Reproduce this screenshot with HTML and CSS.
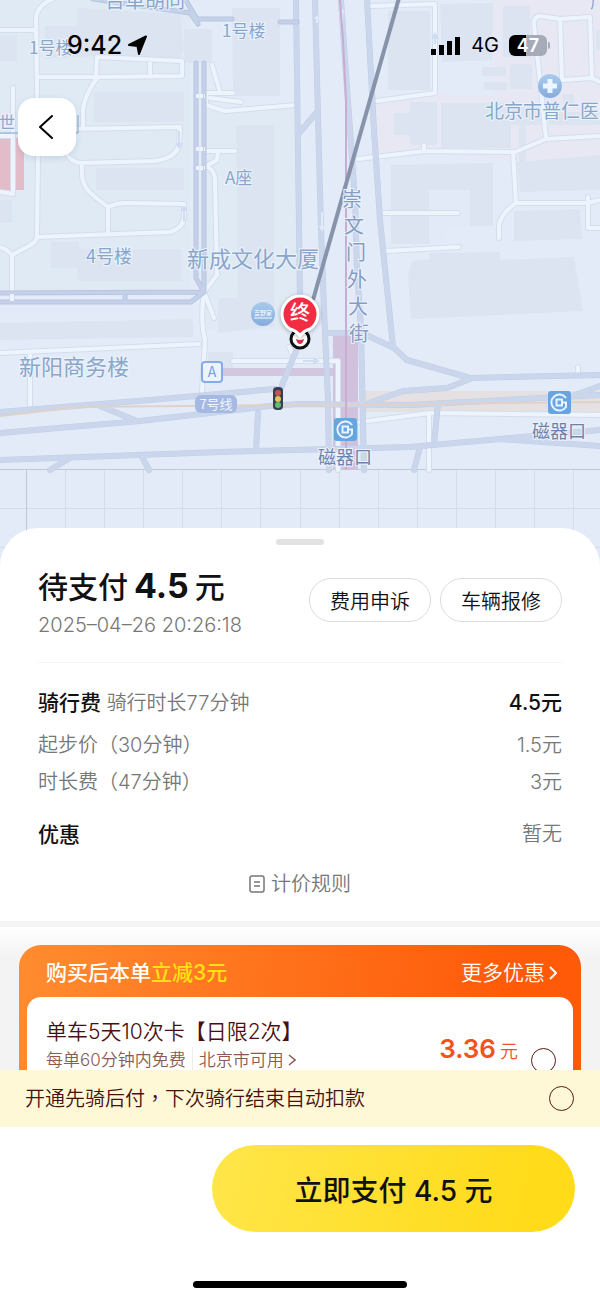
FILE: index.html
```html
<!DOCTYPE html>
<html lang="zh-CN">
<head>
    <meta charset="UTF-8">
    <meta name="viewport" content="width=device-width, initial-scale=1.0">
    <title>待支付</title>
    <link rel="stylesheet" href="styles.css">
</head>
<body>

    <main class="content">

        <section class="map">
            <svg class="map-canvas" viewBox="0 0 600 566" preserveAspectRatio="xMidYMin slice" role="img" aria-label="地图">
                <defs>
                    <path id="lanes" d="M55,-2 Q36,5 36,20 L38,156 L37,236 Q37,243 25,248 L12,255 V298 M0,30 H36 M38,77 H96 L97,57 L182,61 V76 L97,77 M150,60 V76 M97,78 Q83,98 83,112 V128 M72,129 L180,127 L179,145 Q176,158 155,161 L82,163 Q72,163 66,153 M82,163 V175 Q82,187 95,197 L108,207 V232 M108,207 Q118,203 125,203 L184,204 V215 Q184,228 170,232 L37,237 M13,88 V194 L0,192 M0,136 H13 M-2,247 Q5,247 12,255 M0,353 L199,344 M30,353 V405 M212,65 L220,92 M206,93 H233 M206,93 V105 L225,111 L297,105 M210,98 L241,102 M206,151 H235 M218,151 L217,160 L206,166 Q215,170 215,180 L217,275 L204,292 L214,318 M204,292 Q200,320 205,340 L202,392 M233,361 H338 V470 M371,6 L435,4 V93 L377,101 M358,159 L425,151 L515,152 L546,139 L600,136 M513,152 L516,203 Q502,212 499,225 V238 M516,203 H588 L600,200 M588,197 V228 H600 M546,138 L534,25 Q533,17 540,16 L560,19 L590,17 L592,78 L562,80 L560,19 M592,78 L600,82 M384,213 H458 M386,251 L459,247 M578,367 V375 M360,422 L430,413 L600,415 M429,415 V470 M424,151 V145 M289,347 L295,358"/>
                    <path id="streets" d="M296,0 L300,300 M315,0 L318,115 L321,230 L324,310 L328,400 L329,470 M300,132 L317,112 M341,0 L345,60 L350,130 L355,200 L357,270 L361,330 L364,470 M367,0 L374,130 L380,220 L393,347 L407,360 L470,378 L600,375 M328,333 H362 L394,348 M0,412 L150,400 L275,389 M0,433 L140,421 L270,406 L300,404 L410,405 L600,395 M0,460 L220,452 L410,447 L500,439 L600,430 M100,406 L137,421 M258,413 L256,450 M70,458 L50,470 M141,455 L149,470 M369,403 L403,391 L447,388 L470,379 M575,395 L600,386 M438,403 L434,445 M420,447 L414,470 M500,439 L600,446 M278,395 L298,346"/>
                    <path id="avenues" d="M93,-1 L190,13 L198,24 M185,-1 L197,19 H232 M280,22 H297 M196,63 V278 L204,292 M204,63 V292 M0,293 L204,292 L191,302 H0 M125,293 V302"/>
                    <g id="metro">
                        <rect width="23" height="23" rx="3" fill="#66a5e1"/>
                        <path d="M18,7 A8,8 0 1 0 18,16 V11.500 H14" fill="none" stroke="#eaf4ff" stroke-width="2"/>
                        <rect x="8.500" y="8.500" width="5.500" height="6" fill="none" stroke="#eaf4ff" stroke-width="2"/>
                    </g>
                    <linearGradient id="poi" x1="0" y1="0" x2="0" y2="1">
                        <stop offset="0" stop-color="#a9cbee"/>
                        <stop offset="1" stop-color="#86abdc"/>
                    </linearGradient>
                </defs>

                <rect width="600" height="566" fill="#e3ebf8"/>
                <path d="M0,0 H190 V290 H0 Z M206,110 L297,106 V330 H206 Z" fill="#dfeaf4"/>
                <path d="M493,0 H600 V160 L516,160 L425,152 L377,158 V103 L440,93 L493,96 Z" fill="#e8e8f5"/>

                <!-- grid below the last tile -->
                <path class="grid" d="M65,469 V566 M104,469 V566 M143,469 V566 M182,469 V566 M221,469 V566 M260,469 V566 M300,469 V566 M339,469 V566 M378,469 V566 M417,469 V566 M456,469 V566 M495,469 V566 M534,469 V566 M573,469 V566 M0,508 H600 M0,547 H600"/>
                <path class="grid grid-main" d="M0,469 H600 M26,469 V566"/>

                <!-- buildings -->
                <path class="building" d="M77,8 L180,14 L184,48 L180,60 L100,56 L45,58 V26 H77 Z M184,29 H212 V63 H184 Z M0,35 H17 V61 H0 Z M232,8 H280 V96 H233 Z M94,92 H184 V122 H94 Z M96,168 H184 V190 H96 Z M0,200 H12 V223 H0 Z M236,125 H274 V298 L275,326 L218,333 V298 H238 Z M51,242 H79 V249 H181 V281 H77 V268 H51 Z M0,323 L193,319 V337 L0,340 Z M208,352 H233 V368 H208 Z"/>
                <path class="building" d="M388,11 H430 V90 H388 Z M440,4 L493,3 L492,60 L442,62 Z M503,6 H530 V57 H503 Z M482,67 H506 V76 H482 Z M484,82 H507 V90 H484 Z M510,64 H532 V89 H510 Z M410,102 H437 V145 H410 V135 H394 V113 H410 Z M441,103 H545 V125 H526 V162 H519 V125 H511 V148 H441 Z M549,112 H600 V125 H549 Z M563,94 H574 V104 H563 Z M391,165 L493,163 V226 H446 V244 H391 Z M517,162 L600,155 V190 L520,192 Z M514,211 L580,209 L582,239 L514,241 Z M596,30 H600 V50 H596 Z M408,276 L412,261 L430,259 V253 L500,252 V260 L574,257 L583,311 L411,319 Z"/>
                <path d="M429,190 H470 V227 H446 V244 H429 Z" fill="#e1eaf6"/>
                <path d="M0,138 H24 V190 H0 Z" fill="#e3bcc9"/>

                <path d="M360,391 H600 V412 H360 Z" fill="#e5e1e2"/>
                <path d="M222,372 H333" stroke="#d3c7e0" stroke-width="8"/>
                <path d="M333,336 H358 V470 H333 Z" fill="#d0c1dd"/>

                <!-- roads, edge first and fill on top -->
                <use href="#lanes" class="lane-edge"/>
                <use href="#lanes" class="lane"/>
                <use href="#streets" class="street-edge"/>
                <use href="#streets" class="street"/>
                <use href="#avenues" class="avenue-edge"/>
                <use href="#avenues" class="avenue"/>
                <path d="M196,96 H205 M196,149 H205 M196,168 H205 M12,294 V302" stroke="#edf3fd" stroke-width="4" stroke-dasharray="3 1"/>
                <path d="M317,15 l-3,4 h2 v4 h2 v-4 h2 Z M342,8 l-3,5 h2 v10 h2 v-10 h2 Z M322,232 l-3,-6 h2 v-14 h2 v14 h2 Z" fill="#e1eafa"/>
                <path d="M435,32 l-4,7 h3 v5 h2 v-5 h3 Z M184,205 l-4,6 h3 v10 h2 v-10 h3 Z M179,149 l-4,-6 h3 v-12 h2 v12 h3 Z M320,361 l-7,-4 v3 h-10 v2 h10 v3 Z" fill="#cfdcf3"/>

                <path d="M0,416 L80,407 L275,405 L420,404 L600,402" fill="none" stroke="#e0d2c8" stroke-width="2"/>
                <path d="M340,0 L343,40 L346,100 V470" fill="none" stroke="#c8acd2" stroke-width="2"/>

                <!-- ride track -->
                <path d="M399,-2 L313,300" stroke="#8693aa" stroke-width="4"/>

                <g class="label">
                    <text x="29" y="54" font-size="17">1号楼</text>
                    <text x="222" y="37" font-size="17">1号楼</text>
                    <text x="105" y="8" font-size="20">台革胡同</text>
                    <text x="225" y="184" font-size="17">A座</text>
                    <text x="86" y="263" font-size="18">4号楼</text>
                    <text x="-1" y="128" font-size="16">世</text>
                    <text x="187" y="267" font-size="22">新成文化大厦</text>
                    <text x="19" y="375" font-size="22">新阳商务楼</text>
                    <text x="485" y="118" font-size="19">北京市普仁医院</text>
                    <text x="590" y="8" font-size="17">广</text>
                </g>
                <path d="M0,133 H78 V115" fill="none" stroke="#86a5c8" stroke-width="1"/>
                <g class="label label-street" font-size="20">
                    <text x="342" y="207">崇</text>
                    <text x="344" y="233">文</text>
                    <text x="346" y="260">门</text>
                    <text x="347" y="287">外</text>
                    <text x="348" y="314">大</text>
                    <text x="349" y="341">街</text>
                </g>
                <g class="label label-station" font-size="18">
                    <text x="318" y="464">磁器口</text>
                    <text x="532" y="438">磁器口</text>
                </g>

                <circle cx="550" cy="86" r="12" fill="url(#poi)"/>
                <path d="M550,79 V93 M543,86 H557" stroke="#eef5ff" stroke-width="5"/>
                <circle cx="263" cy="314" r="12" fill="url(#poi)"/>
                <text x="254" y="315" font-size="6" font-weight="700" fill="#e3effb">吉野家</text>
                <path d="M254,318 H272" stroke="#c3d9f3" stroke-width="2"/>

                <rect x="202" y="362" width="20" height="20" rx="3" fill="#edf3fd" stroke="#86abe6" stroke-width="2"/>
                <text x="212" y="377" font-size="14" text-anchor="middle" fill="#7a9ee0">A</text>
                <rect x="195" y="395" width="42" height="18" rx="6" fill="#a6b9e2"/>
                <text x="216" y="409" font-size="13" text-anchor="middle" fill="#f2f6fe">7号线</text>

                <use href="#metro" x="334" y="418"/>
                <use href="#metro" x="548" y="391"/>

                <rect x="273" y="387" width="10" height="23" rx="4" fill="#38404f"/>
                <circle cx="278" cy="393" r="3" fill="#c65358"/>
                <circle cx="278" cy="399" r="3" fill="#dfc65c"/>
                <circle cx="278" cy="405" r="3" fill="#5fbd78"/>

                <!-- end of the ride -->
                <circle cx="300" cy="339" r="9" fill="#fff" stroke="#111" stroke-width="3"/>
                <path d="M296,339 Q300,341 304,339 Q303,344 300,344 Q297,344 296,339 Z" fill="#d8344a"/>
                <path class="pin" d="M300,336 Q297,331 290,329 A18,18 0 1 1 310,329 Q303,331 300,336 Z"/>
                <text x="300" y="320" font-size="20" font-weight="500" text-anchor="middle" fill="#fff">终</text>
            </svg>

            <div class="status-bar">
                <div class="status-left">
                    <span>9:42</span>
                    <svg width="20" height="20" viewBox="0 0 20 20"><path d="M1,10 L18,1.500 L11,19 L9.500,11 Z" fill="#000" stroke="#000" stroke-width="2" stroke-linejoin="round"/></svg>
                </div>
                <div class="status-right">
                    <svg width="30" height="19" viewBox="0 0 30 19"><path d="M0,13 h5 v6 h-5 Z M8,9 h5 v10 h-5 Z M16,5 h5 v14 h-5 Z M24,1 h5 v18 h-5 Z"/></svg>
                    <span>4G</span>
                    <span class="battery">47</span>
                </div>
            </div>

            <button type="button" class="back" aria-label="返回">
                <svg width="58" height="58" viewBox="0 0 58 58"><path d="M34,18 L22,29 L34,40" fill="none" stroke="#000" stroke-width="2" stroke-linecap="round" stroke-linejoin="round"/></svg>
            </button>
        </section>

        <section class="sheet">
            <div class="handle"></div>

            <header class="summary">
                <div>
                    <h1 class="total">待支付<b>4.5</b>元</h1>
                    <time class="date">2025–04–26 20:26:18</time>
                </div>
                <div class="actions">
                    <button type="button">费用申诉</button>
                    <button type="button">车辆报修</button>
                </div>
            </header>

            <dl class="fees">
                <div class="fee fee-main">
                    <dt><strong>骑行费</strong> 骑行时长77分钟</dt>
                    <dd><strong>4.5元</strong></dd>
                </div>
                <div class="fee">
                    <dt>起步价（30分钟）</dt>
                    <dd>1.5元</dd>
                </div>
                <div class="fee">
                    <dt>时长费（47分钟）</dt>
                    <dd>3元</dd>
                </div>
                <div class="fee fee-discount">
                    <dt><strong>优惠</strong></dt>
                    <dd>暂无</dd>
                </div>
            </dl>

            <a href="#" class="rules">
                <svg width="16" height="18" viewBox="0 0 16 18" fill="none" stroke="#777" stroke-width="1.500"><rect x="1" y="1" width="14" height="16" rx="2"/><path d="M5,7 H11 M5,11 H11"/></svg>
                计价规则
            </a>
        </section>

        <section class="promo">
            <div class="promo-card">
                <div class="promo-head">
                    <h2>购买后本单<em>立减3元</em></h2>
                    <a href="#">更多优惠
                        <svg width="8" height="14" viewBox="0 0 8 14"><path d="M1,1 L7,7 L1,13" fill="none" stroke="#fff" stroke-width="2"/></svg>
                    </a>
                </div>
                <div class="coupon">
                    <div class="coupon-info">
                        <label for="card">单车5天10次卡【日限2次】</label>
                        <p>
                            <span>每单60分钟内免费</span>
                            <a href="#">北京市可用
                                <svg width="8" height="14" viewBox="0 0 8 14"><path d="M1,2 L7,7 L1,12" fill="none" stroke="#8c5a4e" stroke-width="1.500"/></svg>
                            </a>
                        </p>
                    </div>
                    <div class="coupon-price">
                        <p><b>3.36</b>元</p>
                        <s>元</s>
                    </div>
                    <input type="radio" id="card" name="card" class="circle">
                </div>
            </div>
        </section>

    </main>

    <footer class="bottom">
        <div class="autopay">
            <label for="autopay">开通先骑后付<span lang="zh-TW">，</span>下次骑行结束自动扣款</label>
            <input type="checkbox" id="autopay" class="circle">
        </div>
        <div class="pay-bar">
            <button type="button" class="pay">立即支付 4.5 元</button>
        </div>
        <div class="home-indicator"></div>
    </footer>

</body>
</html>
```

FILE: styles.css
```css
* {
    box-sizing: border-box;
}

body {
    margin: 0;
    height: 100vh;
    display: flex;
    flex-direction: column;
    background-color: #fff;
    color: #111;
    font-family: Inter, "Noto Sans CJK SC", sans-serif;
    font-size: 20px;
    font-weight: 350;
}

h1, h2, p, dl, dd {
    margin: 0;
}

button {
    font: inherit;
    color: inherit;
    cursor: pointer;
}

a {
    color: inherit;
    text-decoration: none;
}

.content {
    flex: 1;
    min-height: 0;
    overflow-y: auto;
    scrollbar-width: none;
}

/* map */
.map {
    position: relative;
    height: 566px;
}

.map-canvas {
    display: block;
    width: 100%;
    height: 100%;
    font-family: "Noto Sans CJK SC", sans-serif;
    font-weight: 400;
}

.grid {
    fill: none;
    stroke: #d3dcea;
    stroke-width: 1;
    shape-rendering: crispEdges;
}

.grid-main {
    stroke: #bfc8d9;
}

.building {
    fill: #dce4f1;
}

.lane, .lane-edge, .street, .street-edge, .avenue, .avenue-edge {
    fill: none;
    stroke-linecap: round;
    stroke-linejoin: round;
}

.lane-edge {
    stroke: #d3deed;
    stroke-width: 6;
}

.lane {
    stroke: #eef4fd;
    stroke-width: 4;
}

.street-edge {
    stroke: #c1cee5;
    stroke-width: 6;
}

.street {
    stroke: #cad6ec;
    stroke-width: 5;
}

.avenue-edge {
    stroke: #b8c5df;
    stroke-width: 5;
}

.avenue {
    stroke: #c5d1e9;
    stroke-width: 3;
}

.label {
    fill: #88a6c9;
    stroke: #edf3fc;
    stroke-width: 2;
    paint-order: stroke;
}

.label-street {
    fill: #849cc2;
}

.label-station {
    fill: #6c82ae;
}

.pin {
    fill: #f42c43;
    stroke: #fff;
    stroke-width: 3;
    filter: drop-shadow(0 1px 2px rgba(0, 0, 0, 0.3));
}

.status-bar {
    position: absolute;
    top: 30px;
    left: 0;
    right: 0;
    padding: 0 53px 0 67px;
    display: flex;
    justify-content: space-between;
    color: #000;
    line-height: 30px;
}

.status-left, .status-right {
    display: flex;
    align-items: center;
}

.status-left {
    gap: 6px;
    font-size: 25px;
    font-weight: 500;
}

.status-right {
    gap: 10px;
    font-size: 20px;
    font-weight: 400;
}

.battery {
    position: relative;
    width: 38px;
    height: 21px;
    border-radius: 6px;
    background: linear-gradient(90deg, #000 46%, #a5abb8 46%);
    color: #fff;
    font-size: 18px;
    font-weight: 600;
    line-height: 21px;
    text-align: center;
}

.battery::after {
    content: "";
    position: absolute;
    left: 39px;
    top: 7px;
    width: 2px;
    height: 7px;
    border-radius: 0 2px 2px 0;
    background-color: #a5abb8;
}

.back {
    position: absolute;
    top: 98px;
    left: 18px;
    padding: 0;
    border: none;
    border-radius: 16px;
    background-color: #fff;
    box-shadow: 0 2px 6px rgba(60, 80, 120, 0.15);
}

.back svg {
    display: block;
}

/* fee sheet */
.sheet {
    position: relative;
    margin-top: -38px;
    padding: 11px 38px 22px;
    border-radius: 38px 38px 0 0;
    background-color: #fff;
}

.handle {
    width: 48px;
    height: 6px;
    margin: 0 auto;
    border-radius: 3px;
    background-color: #e2e2e2;
}

.summary {
    display: flex;
    justify-content: space-between;
    align-items: center;
    padding: 17px 0 24px;
    border-bottom: 1px solid #f5f5f5;
}

.total {
    font-size: 30px;
    font-weight: 500;
    line-height: 50px;
}

.total b {
    margin: 0 6px;
    font-size: 34px;
    font-weight: 700;
    line-height: 1;
}

.date {
    display: block;
    color: #777;
    line-height: 26px;
}

.actions {
    display: flex;
    gap: 9px;
}

.actions button {
    height: 44px;
    padding: 0 20px;
    border: 1px solid #ddd;
    border-radius: 22px;
    background-color: #fff;
}

.fees {
    padding-top: 24px;
    color: #777;
}

.fee {
    display: flex;
    justify-content: space-between;
    line-height: 37px;
}

.fee strong {
    color: #111;
    font-size: 21px;
    font-weight: 500;
}

.fee-main {
    line-height: 32px;
    margin-bottom: 8px;
}

.fee-discount {
    margin-top: 15px;
}

.rules {
    display: flex;
    justify-content: center;
    align-items: center;
    gap: 6px;
    margin-top: 15px;
    color: #777;
    line-height: 30px;
}

/* promo */
.promo {
    padding: 18px 19px;
    border-top: 6px solid #f4f4f4;
    background: linear-gradient(#fff, #f3f3f3 30px);
}

.promo-card {
    padding: 0 8px 8px;
    border-radius: 22px;
    background: linear-gradient(100deg, #ff8c30, #ff5a08 85%);
}

.promo-head {
    display: flex;
    justify-content: space-between;
    padding: 4px 16px 0 19px;
    color: #fff;
    font-size: 21px;
    line-height: 48px;
}

.promo-head h2 {
    font-size: 21px;
    font-weight: 500;
}

.promo-head em {
    color: #ffe115;
    font-style: normal;
}

.promo-head a {
    display: flex;
    align-items: center;
    gap: 4px;
}

.coupon {
    display: flex;
    padding: 20px 17px 20px 19px;
    border-radius: 14px;
    background-color: #fff;
    color: #4a1010;
}

.coupon-info {
    flex: 1;
}

.coupon-info label {
    display: block;
    font-size: 21px;
    line-height: 30px;
}

.coupon-info p {
    display: flex;
    color: #8c5a4e;
    font-size: 17px;
    line-height: 26px;
}

.coupon-info a {
    display: flex;
    align-items: center;
    gap: 4px;
    margin-left: 6px;
    padding-left: 6px;
    border-left: 1px solid #eee;
}

.coupon-price {
    padding-top: 16px;
    color: #f5511e;
    font-size: 18px;
    text-align: right;
}

.coupon-price p {
    line-height: 32px;
}

.coupon-price b {
    margin-right: 4px;
    font-size: 26px;
    font-weight: 600;
}

.coupon-price s {
    display: block;
    color: #999;
    font-size: 15px;
    line-height: 24px;
}

.circle {
    appearance: none;
    width: 25px;
    height: 25px;
    margin: 0;
    border: 1px solid #5c1a10;
    border-radius: 50%;
}

.circle:checked {
    background-color: #ffdd20;
}

.coupon .circle {
    margin: 31px 0 0 13px;
}

/* bottom bar */
.bottom {
    padding-bottom: 13px;
    background-color: #fff;
}

.autopay {
    display: flex;
    justify-content: space-between;
    align-items: center;
    min-height: 57px;
    padding: 0 26px 0 25px;
    background-color: #fef8d6;
    color: #4a1010;
    line-height: 30px;
}

.autopay span {
    font-family: "Noto Sans CJK TC", sans-serif;
}

.pay-bar {
    display: flex;
    justify-content: flex-end;
    padding: 18px 25px 49px;
}

.pay {
    width: 66%;
    height: 87px;
    border: none;
    border-radius: 44px;
    background: linear-gradient(105deg, #ffe64a, #ffdb1a 85%);
    font-size: 28px;
    font-weight: 500;
}

.home-indicator {
    width: 214px;
    height: 7px;
    margin: 0 auto;
    border-radius: 4px;
    background-color: #000;
}
```
